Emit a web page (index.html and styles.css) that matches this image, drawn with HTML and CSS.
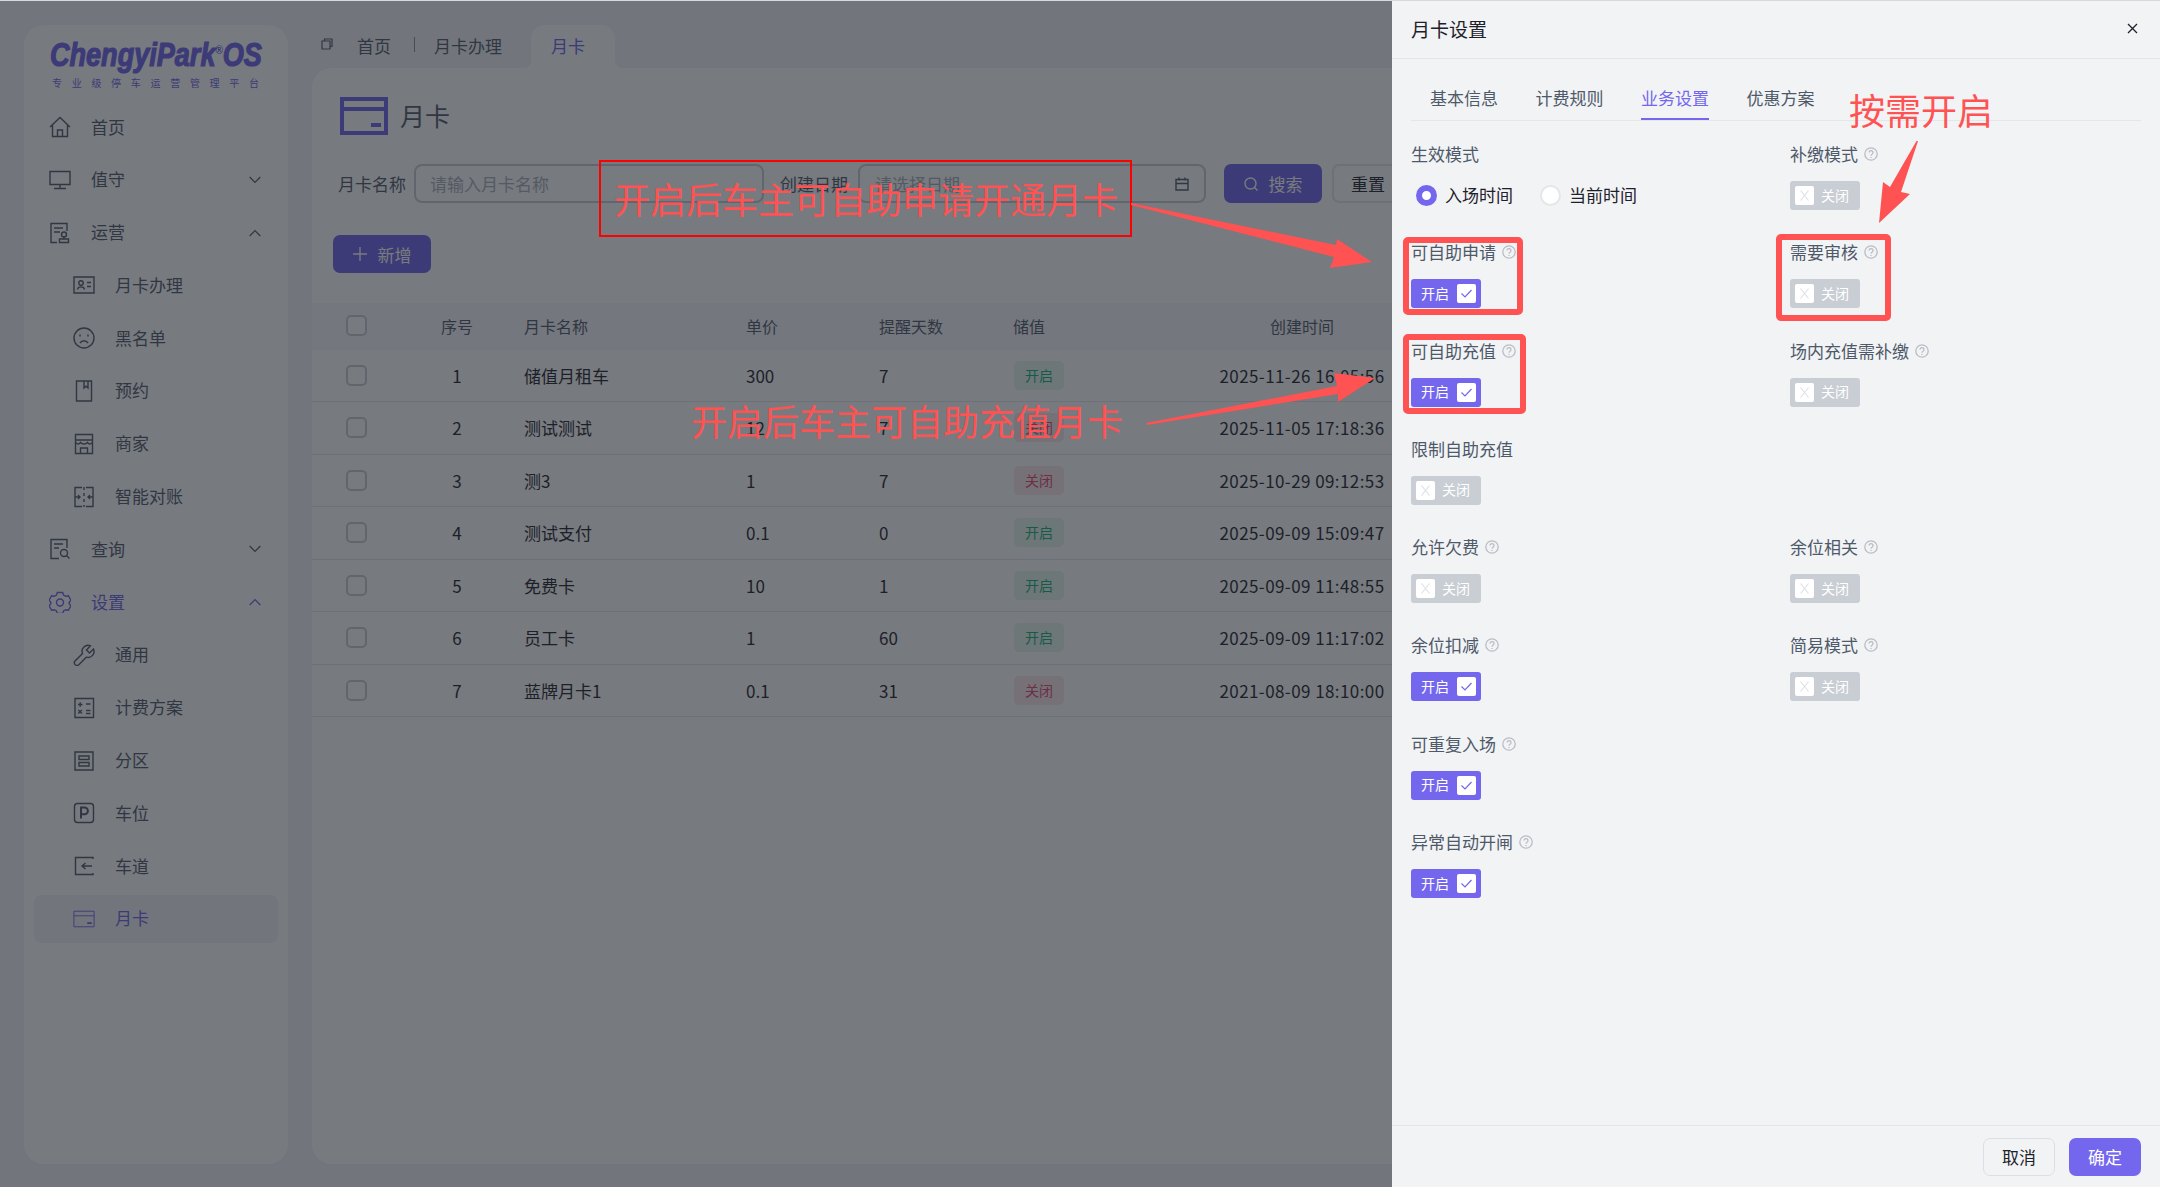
FILE: index.html
```html
<!DOCTYPE html>
<html lang="zh-CN">
<head>
<meta charset="utf-8">
<title>月卡设置</title>
<link rel="stylesheet" href="styles.css">
</head>
<body>
<svg class="sprites" xmlns="http://www.w3.org/2000/svg">
  <symbol id="i-home" viewBox="0 0 22 22"><path d="M1 11 11 1.500 21 11M3.500 9v11.500h15V9M8.500 20.500V14h5v6.500"/></symbol>
  <symbol id="i-monitor" viewBox="0 0 22 22"><path d="M1 2.500h20v13H1zM11 15.500v3.500M5 19.500h12"/></symbol>
  <symbol id="i-stamp" viewBox="0 0 22 22"><path d="M18 9V1.500H2v19h6M5 6h9M5 10h6"/><circle cx="15" cy="12.500" r="2.500"/><path d="M15 15v2M10.500 17h9v3.500h-9z"/></symbol>
  <symbol id="i-id" viewBox="0 0 22 22"><path d="M1 3h20v16H1z"/><circle cx="8" cy="9" r="2.200"/><path d="M4.500 15.500c.5-3.500 6.500-3.500 7 0M14 8.500h4M14 12.500h4"/></symbol>
  <symbol id="i-sad" viewBox="0 0 22 22"><circle cx="11" cy="11" r="10"/><path d="M7 7.500v2M15 7.500v2M7 16c2-3 6-3 8 0"/></symbol>
  <symbol id="i-book" viewBox="0 0 22 22"><path d="M3.500 1h15v20h-15zM11 1v7l2-1.800L15 8V1"/></symbol>
  <symbol id="i-shop" viewBox="0 0 22 22"><path d="M2.500 1.500h17v19h-17zM2.500 7h17M2.500 9.500c2 2 3.500 2 5 0 1.500 2 5.500 2 7 0 1.500 2 3 2 5 0M7.500 20.500V15h7v5.500"/></symbol>
  <symbol id="i-merge" viewBox="0 0 22 22"><path d="M9 1.500H2v19h7M13 1.500h7v19h-7M2 11h5M5 9l2 2-2 2M20 11h-5M17 9l-2 2 2 2M11 1v3M11 7v3M11 13v3M11 19v2"/></symbol>
  <symbol id="i-query" viewBox="0 0 22 22"><path d="M18 10V1.500H2v19h8M5 6h9M5 10h5"/><circle cx="15" cy="15" r="3.500"/><path d="m17.500 17.500 3 3"/></symbol>
  <symbol id="i-gear" viewBox="0 0 22 22"><path d="M8.300 1.500h5.400l.8 2.500 2.300 1.300 2.600-.6 2.600 4.600-1.800 1.900v1.600l1.800 1.900-2.600 4.600-2.600-.6-2.300 1.300-.8 2.500H8.300l-.8-2.500-2.300-1.300-2.600.6-2.600-4.600 1.800-1.900v-1.600L0 9.300l2.600-4.600 2.600.6L7.500 4z"/><circle cx="11" cy="11.500" r="3.500"/></symbol>
  <symbol id="i-wrench" viewBox="0 0 22 22"><path d="m20.500 5-4 4-3-3 4-4.200a6 6 0 0 0-8 7.700L2 17a2.700 2.700 0 0 0 3.800 3.800l7.500-7.600a6 6 0 0 0 7.200-8.200z"/></symbol>
  <symbol id="i-calc" viewBox="0 0 22 22"><path d="M2 1.500h18.500v19H2zM5 7.500h4.500M7.200 5.300v4.400M13 7h4.500M5.300 13l3.600 3.600M8.900 13l-3.600 3.600M13 13.500h4.500M13 16.500h4.500"/></symbol>
  <symbol id="i-zone" viewBox="0 0 22 22"><path d="M2 2h18v18H2zM6 6h10v3.500H6zM6 12.500h10V16H6z"/></symbol>
  <symbol id="i-p" viewBox="0 0 22 22"><rect x="1.500" y="1.500" width="19" height="19" rx="3"/><path stroke-width="2" d="M8 16.500v-11h3.500a3.300 3.300 0 0 1 0 6.800H8"/></symbol>
  <symbol id="i-lane" viewBox="0 0 22 22"><path d="M20 4V2.500H2.500v17H20V18M19 11H9M12.500 8 9 11l3.500 3"/></symbol>
  <symbol id="i-card" viewBox="0 0 48 38"><path d="M2 2h44v34H2zM2 12h44" fill="none"/><path class="fillp" d="M31 26h10v4H31z"/></symbol>
  <symbol id="i-down" viewBox="0 0 12 8"><path d="m.7 1 5.300 5.300L11.300 1"/></symbol>
  <symbol id="i-up" viewBox="0 0 12 8"><path d="M.7 7 6 1.700 11.300 7"/></symbol>
  <symbol id="i-help" viewBox="0 0 14 14"><circle cx="7" cy="7" r="6.200"/><path d="M5 5.500a2 2 0 1 1 3 1.800c-.7.400-1 .8-1 1.500M7 10v1"/></symbol>
  <symbol id="i-check" viewBox="0 0 19 19"><path d="m4.500 9.500 3.500 3.500 6.500-7"/></symbol>
  <symbol id="i-x" viewBox="0 0 19 19"><path d="m5.500 4.500 8 10M13.500 4.500l-8 10"/></symbol>
</svg>

<div class="app">
  <aside class="sidebar">
    <div class="logo">
      <div class="logo-name">ChengyiPark<sup class="logo-r">®</sup>OS</div>
      <div class="logo-sub">专业级停车运营管理平台</div>
    </div>
    <nav class="menu">
      <a class="mi"><svg class="ic"><use href="#i-home"/></svg><span>首页</span></a>
      <a class="mi"><svg class="ic"><use href="#i-monitor"/></svg><span>值守</span><svg class="chev"><use href="#i-down"/></svg></a>
      <a class="mi"><svg class="ic"><use href="#i-stamp"/></svg><span>运营</span><svg class="chev"><use href="#i-up"/></svg></a>
      <a class="mi sub"><svg class="ic"><use href="#i-id"/></svg><span>月卡办理</span></a>
      <a class="mi sub"><svg class="ic"><use href="#i-sad"/></svg><span>黑名单</span></a>
      <a class="mi sub"><svg class="ic"><use href="#i-book"/></svg><span>预约</span></a>
      <a class="mi sub"><svg class="ic"><use href="#i-shop"/></svg><span>商家</span></a>
      <a class="mi sub"><svg class="ic"><use href="#i-merge"/></svg><span>智能对账</span></a>
      <a class="mi"><svg class="ic"><use href="#i-query"/></svg><span>查询</span><svg class="chev"><use href="#i-down"/></svg></a>
      <a class="mi open"><svg class="ic"><use href="#i-gear"/></svg><span>设置</span><svg class="chev"><use href="#i-up"/></svg></a>
      <a class="mi sub"><svg class="ic"><use href="#i-wrench"/></svg><span>通用</span></a>
      <a class="mi sub"><svg class="ic"><use href="#i-calc"/></svg><span>计费方案</span></a>
      <a class="mi sub"><svg class="ic"><use href="#i-zone"/></svg><span>分区</span></a>
      <a class="mi sub"><svg class="ic"><use href="#i-p"/></svg><span>车位</span></a>
      <a class="mi sub"><svg class="ic"><use href="#i-lane"/></svg><span>车道</span></a>
      <a class="mi sub active"><svg class="ic card-ic"><use href="#i-card"/></svg><span>月卡</span></a>
    </nav>
  </aside>

  <main class="main">
    <div class="tabbar">
      <svg class="copy" viewBox="0 0 12 12"><path d="M3.500 3V1h7.500v7.500H9M1 3h8v8H1z"/></svg>
      <span class="crumb">首页</span>
      <span class="crumb-sep"></span>
      <span class="crumb crumb-b">月卡办理</span>
      <span class="crumb-active">月卡</span>
    </div>
    <section class="card">
      <div class="title-row">
        <svg class="title-ic"><use href="#i-card"/></svg>
        <h1 class="title">月卡</h1>
      </div>
      <form class="search">
        <label class="s-label">月卡名称</label>
        <input class="s-input" placeholder="请输入月卡名称">
        <label class="s-label s-label-2">创建日期</label>
        <div class="s-date"><span class="s-ph">请选择日期</span>
          <svg class="cal" viewBox="0 0 14 14"><path d="M1 2.500h12v10.500H1zM1 6.500h12M4 .5v3M10 .5v3"/></svg>
        </div>
        <button type="button" class="btn primary search-btn"><svg class="btn-ic" viewBox="0 0 14 14"><circle cx="6.500" cy="6.500" r="5.500"/><path d="m10.500 10.500 3 3"/></svg>搜索</button>
        <button type="button" class="btn reset">重置</button>
      </form>
      <div class="toolbar">
        <button type="button" class="btn primary add"><svg class="btn-ic" viewBox="0 0 14 14"><path d="M7 0v14M0 7h14"/></svg>新增</button>
      </div>
      <table class="tbl">
        <colgroup><col class="c1"><col class="c2"><col class="c3"><col class="c4"><col class="c5"><col class="c6"><col class="c7"><col></colgroup>
        <thead><tr><th><i class="cb"></i></th><th class="ctr">序号</th><th>月卡名称</th><th>单价</th><th>提醒天数</th><th>储值</th><th class="ctr">创建时间</th><th></th></tr></thead>
        <tbody>
          <tr><td><i class="cb"></i></td><td class="ctr">1</td><td>储值月租车</td><td>300</td><td>7</td><td><b class="tag on">开启</b></td><td class="ctr time">2025-11-26 16:05:56</td><td></td></tr>
          <tr><td><i class="cb"></i></td><td class="ctr">2</td><td>测试测试</td><td>12</td><td>7</td><td><b class="tag off">关闭</b></td><td class="ctr time">2025-11-05 17:18:36</td><td></td></tr>
          <tr><td><i class="cb"></i></td><td class="ctr">3</td><td>测3</td><td>1</td><td>7</td><td><b class="tag off">关闭</b></td><td class="ctr time">2025-10-29 09:12:53</td><td></td></tr>
          <tr><td><i class="cb"></i></td><td class="ctr">4</td><td>测试支付</td><td>0.1</td><td>0</td><td><b class="tag on">开启</b></td><td class="ctr time">2025-09-09 15:09:47</td><td></td></tr>
          <tr><td><i class="cb"></i></td><td class="ctr">5</td><td>免费卡</td><td>10</td><td>1</td><td><b class="tag on">开启</b></td><td class="ctr time">2025-09-09 11:48:55</td><td></td></tr>
          <tr><td><i class="cb"></i></td><td class="ctr">6</td><td>员工卡</td><td>1</td><td>60</td><td><b class="tag on">开启</b></td><td class="ctr time">2025-09-09 11:17:02</td><td></td></tr>
          <tr><td><i class="cb"></i></td><td class="ctr">7</td><td>蓝牌月卡1</td><td>0.1</td><td>31</td><td><b class="tag off">关闭</b></td><td class="ctr time">2021-08-09 18:10:00</td><td></td></tr>
        </tbody>
      </table>
    </section>
  </main>
</div>

<div class="mask"></div>

<aside class="drawer">
  <header class="d-head">
    <span class="d-title">月卡设置</span>
    <svg class="d-close" viewBox="0 0 11 11"><path d="m1 1 9 9M10 1l-9 9"/></svg>
  </header>
  <div class="d-body">
    <div class="d-tabs">
      <span class="d-tab">基本信息</span>
      <span class="d-tab">计费规则</span>
      <span class="d-tab current">业务设置</span>
      <span class="d-tab">优惠方案</span>
    </div>
    <div class="d-form">
      <div class="field">
        <div class="f-label">生效模式</div>
        <div class="radios">
          <span class="radio checked"></span><span class="r-text">入场时间</span>
          <span class="radio"></span><span class="r-text">当前时间</span>
        </div>
      </div>
      <div class="field">
        <div class="f-label">补缴模式<svg class="help"><use href="#i-help"/></svg></div>
        <div class="sw"><span class="knob"><svg class="k-ic"><use href="#i-x"/></svg></span><span class="sw-t">关闭</span></div>
      </div>
      <div class="field">
        <div class="f-label">可自助申请<svg class="help"><use href="#i-help"/></svg></div>
        <div class="sw is-on"><span class="sw-t">开启</span><span class="knob"><svg class="k-ic"><use href="#i-check"/></svg></span></div>
      </div>
      <div class="field">
        <div class="f-label">需要审核<svg class="help"><use href="#i-help"/></svg></div>
        <div class="sw"><span class="knob"><svg class="k-ic"><use href="#i-x"/></svg></span><span class="sw-t">关闭</span></div>
      </div>
      <div class="field">
        <div class="f-label">可自助充值<svg class="help"><use href="#i-help"/></svg></div>
        <div class="sw is-on"><span class="sw-t">开启</span><span class="knob"><svg class="k-ic"><use href="#i-check"/></svg></span></div>
      </div>
      <div class="field">
        <div class="f-label">场内充值需补缴<svg class="help"><use href="#i-help"/></svg></div>
        <div class="sw"><span class="knob"><svg class="k-ic"><use href="#i-x"/></svg></span><span class="sw-t">关闭</span></div>
      </div>
      <div class="field">
        <div class="f-label">限制自助充值</div>
        <div class="sw"><span class="knob"><svg class="k-ic"><use href="#i-x"/></svg></span><span class="sw-t">关闭</span></div>
      </div>
      <div class="field"></div>
      <div class="field">
        <div class="f-label">允许欠费<svg class="help"><use href="#i-help"/></svg></div>
        <div class="sw"><span class="knob"><svg class="k-ic"><use href="#i-x"/></svg></span><span class="sw-t">关闭</span></div>
      </div>
      <div class="field">
        <div class="f-label">余位相关<svg class="help"><use href="#i-help"/></svg></div>
        <div class="sw"><span class="knob"><svg class="k-ic"><use href="#i-x"/></svg></span><span class="sw-t">关闭</span></div>
      </div>
      <div class="field">
        <div class="f-label">余位扣减<svg class="help"><use href="#i-help"/></svg></div>
        <div class="sw is-on"><span class="sw-t">开启</span><span class="knob"><svg class="k-ic"><use href="#i-check"/></svg></span></div>
      </div>
      <div class="field">
        <div class="f-label">简易模式<svg class="help"><use href="#i-help"/></svg></div>
        <div class="sw"><span class="knob"><svg class="k-ic"><use href="#i-x"/></svg></span><span class="sw-t">关闭</span></div>
      </div>
      <div class="field">
        <div class="f-label">可重复入场<svg class="help"><use href="#i-help"/></svg></div>
        <div class="sw is-on"><span class="sw-t">开启</span><span class="knob"><svg class="k-ic"><use href="#i-check"/></svg></span></div>
      </div>
      <div class="field"></div>
      <div class="field">
        <div class="f-label">异常自动开闸<svg class="help"><use href="#i-help"/></svg></div>
        <div class="sw is-on"><span class="sw-t">开启</span><span class="knob"><svg class="k-ic"><use href="#i-check"/></svg></span></div>
      </div>
    </div>
  </div>
  <footer class="d-foot">
    <button type="button" class="btn cancel">取消</button>
    <button type="button" class="btn confirm">确定</button>
  </footer>
</aside>

<svg class="marks" viewBox="0 0 2160 1187" xmlns="http://www.w3.org/2000/svg">
  <rect class="thin" x="600" y="161" width="531" height="75"/>
  <rect class="thick" x="1406" y="240" width="114" height="72" rx="2"/>
  <rect class="thick" x="1406" y="337" width="117" height="74" rx="2"/>
  <rect class="thick" x="1779" y="237" width="109" height="81" rx="2"/>
  <polygon class="arrow" points="1131,203 1131,205 1334,257 1330,268 1372,262 1337,239 1336,245"/>
  <polygon class="arrow" points="1146,423 1147,425 1338,394 1338,402 1375,378 1334,373 1337,386"/>
  <polygon class="arrow" points="1918,141 1916.500,141 1890,187 1883,182 1879,223 1910,194 1901,192"/>
</svg>
<div class="note note-1">开启后车主可自助申请开通月卡</div>
<div class="note note-2">开启后车主可自助充值月卡</div>
<div class="note note-3">按需开启</div>
</body>
</html>
```
FILE: styles.css
```css
* { box-sizing: border-box; }
html, body { margin: 0; padding: 0; }
body {
  position: relative;
  width: 2160px;
  height: 1187px;
  overflow: hidden;
  background: #f2f3f5;
  font-family: "Noto Sans CJK SC", "Noto Sans", sans-serif;
  font-size: 17px;
  color: #1d2129;
}
body::after {
  content: "";
  position: absolute;
  top: 0;
  left: 0;
  right: 0;
  height: 1px;
  background: #d8d9dc;
}
.sprites { position: absolute; width: 0; height: 0; }

.app { display: flex; height: 1187px; }

/* sidebar */
.sidebar {
  flex: none;
  width: 264px;
  margin: 25px 24px 23px;
  padding: 0 10px;
  background: #fff;
  border-radius: 20px;
}
.logo { height: 78px; padding: 14px 0 0 16px; }
.logo-name {
  height: 32px;
  font: italic 700 33px/32px "Liberation Sans", sans-serif;
  color: #6d5fea;
  -webkit-text-stroke: 1.2px #6d5fea;
  white-space: nowrap;
  letter-spacing: 0;
  transform: scaleX(0.82);
  transform-origin: left center;
}
.logo-r { font-size: 12px; line-height: 0; vertical-align: 12px; -webkit-text-stroke: 0; }
.logo-sub {
  margin-top: 5px;
  margin-left: 2px;
  font-size: 10px;
  line-height: 14px;
  letter-spacing: 9.7px;
  color: #6d5fea;
  white-space: nowrap;
}
.menu { display: flex; flex-direction: column; gap: 4.8px; }
.mi {
  display: flex;
  align-items: center;
  height: 48px;
  padding-left: 15px;
  border-radius: 8px;
  color: #4e5969;
  font-size: 17px;
}
.mi span { position: relative; top: -1px; }
.mi.sub { padding-left: 39px; }
.ic {
  flex: none;
  width: 22px;
  height: 22px;
  margin-right: 20px;
  fill: none;
  stroke: currentColor;
  stroke-width: 1.4;
}
.card-ic { stroke-width: 2; }
.chev {
  flex: none;
  width: 12px;
  height: 8px;
  margin-left: auto;
  margin-right: 17px;
  fill: none;
  stroke: currentColor;
  stroke-width: 1.2;
}
.mi.open { color: #6d5fea; }
.mi.active { background: #f2f3f5; color: #6d5fea; }
.fillp { fill: currentColor; stroke: none; }

/* main */
.main { flex: 1; min-width: 0; display: flex; flex-direction: column; }
.tabbar {
  flex: none;
  display: flex;
  align-items: center;
  height: 68px;
  padding: 25px 0 0 9px;
  color: #4e5969;
}
.copy { width: 12px; height: 12px; margin: -6px 24px 0 0; fill: none; stroke: #4e5969; stroke-width: 1.2; }
.crumb { line-height: 41px; height: 43px; }
.crumb-sep { width: 1px; height: 15px; margin: -4px 19px 0 23px; background: #86909c; }
.crumb-b { margin-right: 29px; }
.crumb-active {
  position: relative;
  width: 84px;
  height: 43px;
  padding-left: 20px;
  line-height: 41px;
  color: #6d5fea;
  background: #fff;
  border-radius: 14px 14px 0 0;
}
.crumb-active::before, .crumb-active::after {
  content: "";
  position: absolute;
  bottom: 0;
  width: 8px;
  height: 8px;
}
.crumb-active::before { left: -8px; background: radial-gradient(circle at 0 0, transparent 8px, #fff 8.5px); }
.crumb-active::after { right: -8px; background: radial-gradient(circle at 100% 0, transparent 8px, #fff 8.5px); }

.card {
  flex: 1;
  margin: 0 24px 23px 0;
  background: #fff;
  border-radius: 20px;
  overflow: hidden;
}
.title-row { display: flex; align-items: center; padding: 29px 0 0 28px; height: 67px; }
.title-ic { width: 48px; height: 38px; margin-right: 12px; fill: none; stroke: #6d5fea; stroke-width: 4; color: #6d5fea; }
.title { margin: -2px 0 0; font-size: 25px; font-weight: 400; line-height: 38px; color: #4e5969; }

.search { display: flex; align-items: center; margin-top: 29px; padding-left: 26px; height: 39px; }
.s-label { width: 76px; flex: none; color: #4e5969; }
.s-label-2 { width: 78px; margin-left: 16px; }
.s-input, .s-date {
  flex: none;
  height: 39px;
  border: 2px solid #c9cdd4;
  border-radius: 8px;
  background: #fff;
  font: inherit;
  color: #1d2129;
}
.s-input { width: 350px; padding: 0 14px; outline: 0; }
.s-input::placeholder { color: #a9aeb8; opacity: 1; }
.s-date { display: flex; align-items: center; width: 348px; padding: 0 15px; }
.s-ph { color: #a9aeb8; }
.cal { width: 14px; height: 14px; margin-left: auto; fill: none; stroke: #4e5969; stroke-width: 1.4; }
.btn {
  flex: none;
  display: inline-flex;
  align-items: center;
  justify-content: center;
  border: 0;
  border-radius: 7px;
  font: inherit;
  cursor: pointer;
}
.primary { background: #6d5fea; color: #fff; }
.btn-ic { width: 14px; height: 14px; margin-right: 11px; fill: none; stroke: currentColor; stroke-width: 1.4; }
.search-btn { width: 98px; height: 39px; margin-left: 18px; }
.reset { width: 72px; height: 39px; margin-left: 10px; padding: 0; background: #fff; border: 2px solid #e5e6eb; color: #1d2129; }
.toolbar { display: flex; margin-top: 32px; padding-left: 21px; }
.add { width: 98px; height: 38px; }

.tbl { width: 100%; margin-top: 30px; border-collapse: collapse; table-layout: fixed; }
.c1 { width: 108px; }
.c2 { width: 74px; }
.c3 { width: 222px; }
.c4 { width: 133px; }
.c5 { width: 134px; }
.c6 { width: 204px; }
.c7 { width: 230px; }
.tbl th, .tbl td { padding: 0 0 0 30px; text-align: left; white-space: nowrap; border-bottom: 1px solid #e5e6eb; }
.tbl th { height: 46px; background: #f7f8fa; font-size: 16px; font-weight: 400; color: #4e5969; border-bottom-color: #f2f3f5; }
.tbl td { height: 52.5px; font-size: 17px; }
.tbl th:first-child, .tbl td:first-child { padding-left: 34px; }
.tbl th.ctr, .tbl td.ctr { padding-left: 0; text-align: center; }
.tbl td.time { letter-spacing: 0.42px; }
.tag {
  display: block;
  width: 50px;
  height: 29px;
  margin-left: 1px;
  border-radius: 5px;
  font-size: 14px;
  font-weight: 400;
  line-height: 29px;
  text-align: center;
}
.cb { display: block; width: 21px; height: 21px; border: 2px solid #c9cdd4; border-radius: 5px; background: #fff; }
.tag.on { background: #e6f7ee; color: #12b07c; }
.tag.off { background: #fae8ec; color: #e8436a; }

/* mask + drawer */
.mask { position: absolute; inset: 0; background: rgba(29, 33, 41, 0.6); }
.drawer {
  position: absolute;
  top: 0;
  right: 0;
  bottom: 0;
  width: 768px;
  display: flex;
  flex-direction: column;
  background: #f2f3f5;
}
.d-head {
  flex: none;
  display: flex;
  align-items: center;
  justify-content: space-between;
  height: 59px;
  padding: 0 22px 2px 19px;
  border-bottom: 1px solid #e5e6eb;
}
.d-title { font-size: 19px; color: #1d2129; }
.d-close { width: 11px; height: 11px; fill: none; stroke: #1d2129; stroke-width: 1.3; }
.d-body { flex: 1; min-height: 0; padding: 0 19px; }
.d-tabs {
  display: flex;
  gap: 37.500px;
  height: 62px;
  padding: 24px 0 0 19px;
  border-bottom: 1px solid #e5e6eb;
}
.d-tab { height: 37px; line-height: 29px; color: #4e5969; font-size: 17px; }
.d-tab.current { color: #7467ee; border-bottom: 2px solid #7467ee; }
.d-form {
  display: grid;
  grid-template-columns: 379px 1fr;
  grid-auto-rows: 68px;
  row-gap: 30.3px;
  margin-top: 21px;
}
.f-label {
  display: flex;
  align-items: center;
  height: 24px;
  margin-bottom: 15px;
  color: #4e5969;
  font-size: 17px;
  line-height: 24px;
}
.help { flex: none; width: 14px; height: 14px; margin-left: 6px; fill: none; stroke: #b9bdc5; stroke-width: 1.3; }
.radios { display: flex; align-items: center; height: 29px; padding-left: 5px; }
.radio { flex: none; width: 21px; height: 21px; border-radius: 50%; background: #fff; border: 2px solid #e5e6eb; }
.radio.checked { background: #fff; border: 6.5px solid #7467ee; }
.r-text { position: relative; top: -1px; margin: 0 27px 0 8px; color: #1d2129; }
.sw {
  display: flex;
  align-items: center;
  width: 70px;
  height: 29px;
  padding: 0 5px;
  gap: 7px;
  border-radius: 3px;
  background: #c9cdd4;
  color: #fff;
  font-size: 14px;
}
.sw-t { position: relative; top: -1px; }
.sw.is-on { background: #7467ee; padding-left: 10px; gap: 8px; }
.knob { flex: none; width: 19px; height: 19px; border-radius: 2px; background: #fff; }
.k-ic { display: block; width: 19px; height: 19px; fill: none; stroke: #dfe1e6; stroke-width: 1.2; }
.is-on .k-ic { stroke: #7467ee; stroke-width: 1.2; }
.d-foot {
  flex: none;
  display: flex;
  align-items: center;
  justify-content: flex-end;
  gap: 14px;
  height: 62px;
  padding: 0 19px;
  border-top: 1px solid #e5e6eb;
}
.cancel, .confirm { width: 72px; height: 38px; }
.cancel { background: #f2f3f5; border: 1px solid #dcdfe6; color: #1d2129; }
.confirm { background: #7467ee; color: #fff; }

/* hand-drawn annotations on top of the screenshot */
.marks { position: absolute; inset: 0; width: 2160px; height: 1187px; pointer-events: none; }
.thin { fill: none; stroke: #ff0000; stroke-width: 2; }
.thick { fill: none; stroke: #ff5252; stroke-width: 6; }
.arrow { fill: #ff5252; }
.note {
  position: absolute;
  font-size: 36px;
  line-height: 40px;
  color: #ff5252;
  white-space: nowrap;
}
.note-1 { left: 614px; top: 178px; }
.note-2 { left: 691px; top: 400px; }
.note-3 { left: 1849px; top: 89px; }
```
